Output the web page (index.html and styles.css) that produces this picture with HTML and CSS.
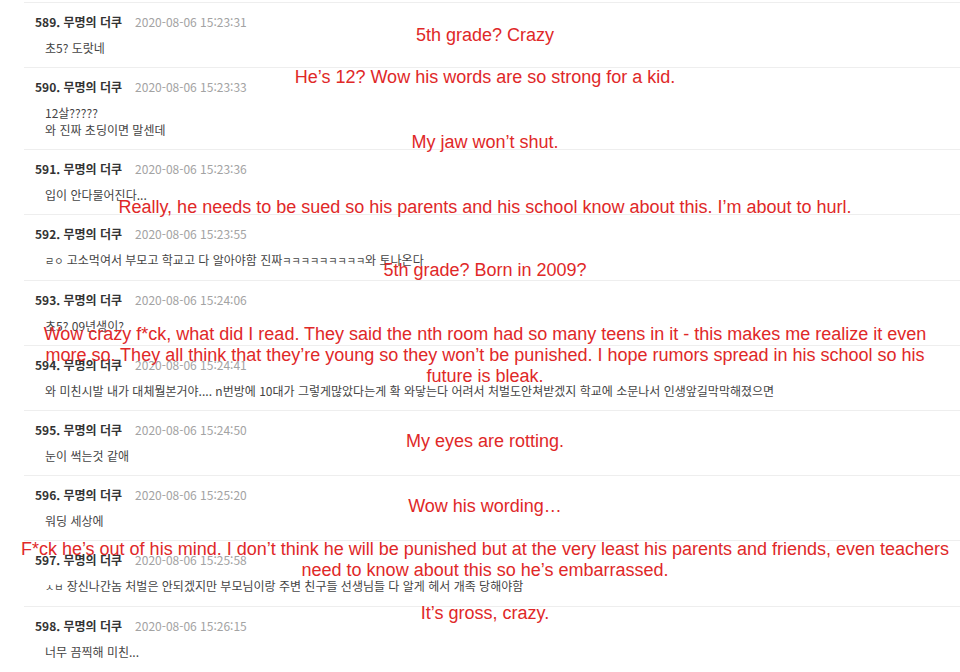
FILE: index.html
```html
<!DOCTYPE html>
<html lang="ko">
<head>
<meta charset="utf-8">
<title>댓글</title>
<link rel="stylesheet" href="styles.css">
</head>
<body>
<div class="page">
  <ul class="comments">
    <li class="comment">
      <div class="head"><span class="name">589. 무명의 더쿠</span><span class="date">2020-08-06 15:23:31</span></div>
      <div class="body">초5? 도랏네</div>
    </li>
    <li class="comment">
      <div class="head"><span class="name">590. 무명의 더쿠</span><span class="date">2020-08-06 15:23:33</span></div>
      <div class="body">12살?????<br>와 진짜 초딩이면 말센데</div>
    </li>
    <li class="comment">
      <div class="head"><span class="name">591. 무명의 더쿠</span><span class="date">2020-08-06 15:23:36</span></div>
      <div class="body">입이 안다물어진다...</div>
    </li>
    <li class="comment">
      <div class="head"><span class="name">592. 무명의 더쿠</span><span class="date">2020-08-06 15:23:55</span></div>
      <div class="body"><span class="jamo">ㄹㅇ</span> 고소먹여서 부모고 학교고 다 알아야함 진짜<span class="jamo">ㅋㅋㅋㅋㅋㅋㅋㅋㅋ</span>와 토나온다</div>
    </li>
    <li class="comment">
      <div class="head"><span class="name">593. 무명의 더쿠</span><span class="date">2020-08-06 15:24:06</span></div>
      <div class="body">초5? 09년생이?</div>
    </li>
    <li class="comment">
      <div class="head"><span class="name">594. 무명의 더쿠</span><span class="date">2020-08-06 15:24:41</span></div>
      <div class="body">와 미친시발 내가 대체뭘본거야.... n번방에 10대가 그렇게많았다는게 확 와닿는다 어려서 처벌도안쳐받겠지 학교에 소문나서 인생앞길막막해졌으면</div>
    </li>
    <li class="comment">
      <div class="head"><span class="name">595. 무명의 더쿠</span><span class="date">2020-08-06 15:24:50</span></div>
      <div class="body">눈이 썩는것 같애</div>
    </li>
    <li class="comment">
      <div class="head"><span class="name">596. 무명의 더쿠</span><span class="date">2020-08-06 15:25:20</span></div>
      <div class="body">워딩 세상에</div>
    </li>
    <li class="comment">
      <div class="head"><span class="name">597. 무명의 더쿠</span><span class="date">2020-08-06 15:25:58</span></div>
      <div class="body"><span class="jamo">ㅅㅂ</span> 장신나간놈 처벌은 안되겠지만 부모님이랑 주변 친구들 선생님들 다 알게 헤서 개족 당해야함</div>
    </li>
    <li class="comment">
      <div class="head"><span class="name">598. 무명의 더쿠</span><span class="date">2020-08-06 15:26:15</span></div>
      <div class="body">너무 끔찍해 미친...</div>
    </li>
  </ul>

  <div class="captions">
    <p class="cap c1">5th grade? Crazy</p>
    <p class="cap c2">He’s 12? Wow his words are so strong for a kid.</p>
    <p class="cap c3">My jaw won’t shut.</p>
    <p class="cap c4">Really, he needs to be sued so his parents and his school know about this. I’m about to hurl.</p>
    <p class="cap c5">5th grade? Born in 2009?</p>
    <p class="cap c6">Wow crazy f*ck, what did I read. They said the nth room had so many teens in it - this makes me realize it even<br>more so. They all think that they’re young so they won’t be punished. I hope rumors spread in his school so his<br>future is bleak.</p>
    <p class="cap c7">My eyes are rotting.</p>
    <p class="cap c8">Wow his wording…</p>
    <p class="cap c9">F*ck he’s out of his mind. I don’t think he will be punished but at the very least his parents and friends, even teachers<br>need to know about this so he’s embarrassed.</p>
    <p class="cap c10">It’s gross, crazy.</p>
  </div>
</div>
</body>
</html>
```

FILE: styles.css
```css
html, body {
  margin: 0;
  padding: 0;
  background: #ffffff;
}

.page {
  position: relative;
  width: 960px;
  height: 672px;
  overflow: hidden;
  padding-top: 2px;
  box-sizing: border-box;
  font-family: "Noto Sans CJK KR", "Noto Sans", sans-serif;
}

.comments {
  list-style: none;
  margin: 0 0 0 24px;
  padding: 0;
}

.comment {
  border-top: 1px solid #eeeeee;
  padding: 10px 0 11px;
  display: flex;
  flex-direction: column;
  gap: 8px;
}

.head {
  display: flex;
  align-items: center;
  height: 18px;
  padding-left: 11px;
  font-size: 12px;
  line-height: 18px;
}

.name {
  font-weight: bold;
  color: #333333;
}

.date {
  margin-left: 13px;
  color: #a3a3a3;
}

.body {
  padding-left: 21px;
  font-size: 12px;
  line-height: 17px;
  color: #444444;
}

.jamo {
  font-size: 10px;
}

.captions {
  position: absolute;
  inset: 0;
  pointer-events: none;
}

.cap {
  position: absolute;
  left: 0;
  width: 970px;
  margin: 0;
  text-align: center;
  font-family: "Liberation Sans", Arial, sans-serif;
  font-size: 18px;
  line-height: 21px;
  color: #e02828;
  white-space: nowrap;
}

.c1 { top: 25px; }
.c2 { top: 67px; }
.c3 { top: 132px; }
.c4 { top: 197px; }
.c5 { top: 260px; }
.c6 { top: 324px; }
.c7 { top: 431px; }
.c8 { top: 496px; }
.c9 { top: 539px; }
.c10 { top: 603px; }
```
